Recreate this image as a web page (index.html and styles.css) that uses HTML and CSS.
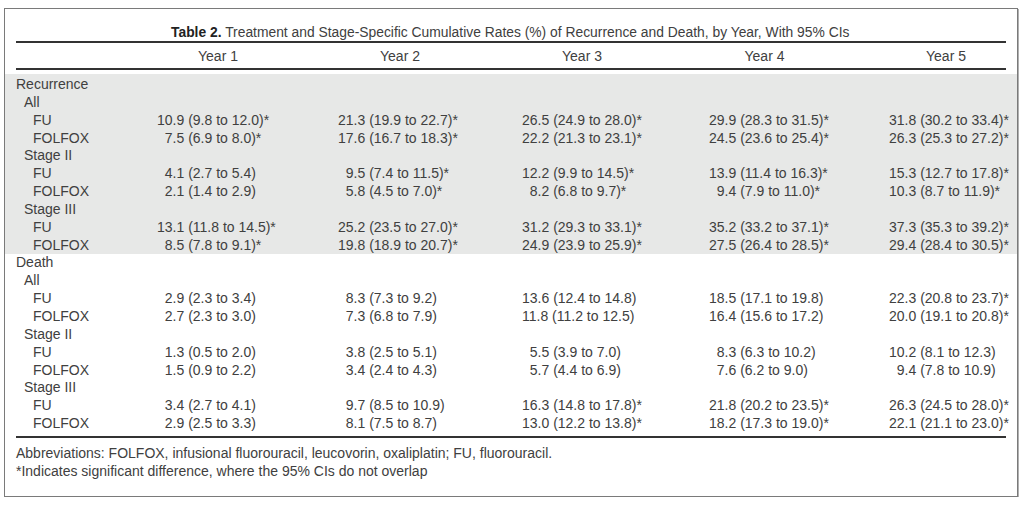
FILE: index.html
```html
<!DOCTYPE html>
<html>
<head>
<meta charset="utf-8">
<link rel="stylesheet" href="styles.css">
</head>
<body>
<div class="frame">
  <div class="caption"><b>Table 2.</b> Treatment and Stage-Specific Cumulative Rates (%) of Recurrence and Death, by Year, With 95% CIs</div>
  <div class="head">
    <span></span><span>Year 1</span><span>Year 2</span><span>Year 3</span><span>Year 4</span><span class="last">Year 5</span>
  </div>
  <div class="band shaded">
    <div class="row"><span class="l0">Recurrence</span></div>
    <div class="row"><span class="l1">All</span></div>
    <div class="row"><span class="l2">FU</span><span>10.9 (9.8 to 12.0)*</span><span>21.3 (19.9 to 22.7)*</span><span>26.5 (24.9 to 28.0)*</span><span>29.9 (28.3 to 31.5)*</span><span>31.8 (30.2 to 33.4)*</span></div>
    <div class="row"><span class="l2">FOLFOX</span><span class="d1">7.5 (6.9 to 8.0)*</span><span>17.6 (16.7 to 18.3)*</span><span>22.2 (21.3 to 23.1)*</span><span>24.5 (23.6 to 25.4)*</span><span>26.3 (25.3 to 27.2)*</span></div>
    <div class="row"><span class="l1">Stage II</span></div>
    <div class="row"><span class="l2">FU</span><span class="d1">4.1 (2.7 to 5.4)</span><span class="d1">9.5 (7.4 to 11.5)*</span><span>12.2 (9.9 to 14.5)*</span><span>13.9 (11.4 to 16.3)*</span><span>15.3 (12.7 to 17.8)*</span></div>
    <div class="row"><span class="l2">FOLFOX</span><span class="d1">2.1 (1.4 to 2.9)</span><span class="d1">5.8 (4.5 to 7.0)*</span><span class="d1">8.2 (6.8 to 9.7)*</span><span class="d1">9.4 (7.9 to 11.0)*</span><span>10.3 (8.7 to 11.9)*</span></div>
    <div class="row"><span class="l1">Stage III</span></div>
    <div class="row"><span class="l2">FU</span><span>13.1 (11.8 to 14.5)*</span><span>25.2 (23.5 to 27.0)*</span><span>31.2 (29.3 to 33.1)*</span><span>35.2 (33.2 to 37.1)*</span><span>37.3 (35.3 to 39.2)*</span></div>
    <div class="row"><span class="l2">FOLFOX</span><span class="d1">8.5 (7.8 to 9.1)*</span><span>19.8 (18.9 to 20.7)*</span><span>24.9 (23.9 to 25.9)*</span><span>27.5 (26.4 to 28.5)*</span><span>29.4 (28.4 to 30.5)*</span></div>
  </div>
  <div class="band">
    <div class="row"><span class="l0">Death</span></div>
    <div class="row"><span class="l1">All</span></div>
    <div class="row"><span class="l2">FU</span><span class="d1">2.9 (2.3 to 3.4)</span><span class="d1">8.3 (7.3 to 9.2)</span><span>13.6 (12.4 to 14.8)</span><span>18.5 (17.1 to 19.8)</span><span>22.3 (20.8 to 23.7)*</span></div>
    <div class="row"><span class="l2">FOLFOX</span><span class="d1">2.7 (2.3 to 3.0)</span><span class="d1">7.3 (6.8 to 7.9)</span><span>11.8 (11.2 to 12.5)</span><span>16.4 (15.6 to 17.2)</span><span>20.0 (19.1 to 20.8)*</span></div>
    <div class="row"><span class="l1">Stage II</span></div>
    <div class="row"><span class="l2">FU</span><span class="d1">1.3 (0.5 to 2.0)</span><span class="d1">3.8 (2.5 to 5.1)</span><span class="d1">5.5 (3.9 to 7.0)</span><span class="d1">8.3 (6.3 to 10.2)</span><span>10.2 (8.1 to 12.3)</span></div>
    <div class="row"><span class="l2">FOLFOX</span><span class="d1">1.5 (0.9 to 2.2)</span><span class="d1">3.4 (2.4 to 4.3)</span><span class="d1">5.7 (4.4 to 6.9)</span><span class="d1">7.6 (6.2 to 9.0)</span><span class="d1">9.4 (7.8 to 10.9)</span></div>
    <div class="row"><span class="l1">Stage III</span></div>
    <div class="row"><span class="l2">FU</span><span class="d1">3.4 (2.7 to 4.1)</span><span class="d1">9.7 (8.5 to 10.9)</span><span>16.3 (14.8 to 17.8)*</span><span>21.8 (20.2 to 23.5)*</span><span>26.3 (24.5 to 28.0)*</span></div>
    <div class="row"><span class="l2">FOLFOX</span><span class="d1">2.9 (2.5 to 3.3)</span><span class="d1">8.1 (7.5 to 8.7)</span><span>13.0 (12.2 to 13.8)*</span><span>18.2 (17.3 to 19.0)*</span><span>22.1 (21.1 to 23.0)*</span></div>
  </div>
  <div class="endrule"></div>
  <div class="notes">
    <p>Abbreviations: FOLFOX, infusional fluorouracil, leucovorin, oxaliplatin; FU, fluorouracil.</p>
    <p>*Indicates significant difference, where the 95% CIs do not overlap</p>
  </div>
</div>
</body>
</html>
```

FILE: styles.css
```css
html, body {
  margin: 0;
  padding: 0;
  background: #ffffff;
}
body {
  font-family: "Liberation Sans", Arial, sans-serif;
  font-size: 14px;
  color: #404040;
  padding: 8px 6px 0 4px;
}
.frame {
  box-sizing: border-box;
  width: 1014px;
  height: 489px;
  border: 1.5px solid #7a7a7a;
  box-shadow: 1px 1px 0 #b0b0b0;
}
.caption {
  margin: 14px 11px 0 11px;
  font-size: 13.85px;
  line-height: 18px;
  padding-left: 155px;
  border-bottom: 2px solid #333;
}
.caption b {
  font-weight: bold;
  color: #222;
}
.head {
  margin: 0 11px;
  display: grid;
  grid-template-columns: 111px 182px 182px 182px 183px 1fr;
  line-height: 18px;
  padding: 4px 0 3px;
  border-bottom: 2px solid #333;
  text-align: center;
}
.head .last {
  text-align: right;
  padding-right: 40px;
}
.band {
  padding: 0 11px;
}
.shaded {
  margin-top: 4px;
  padding-top: 2px;
  background: #e7e8e7;
}
.row {
  display: grid;
  grid-template-columns: 141px 181px 184px 187px 180px 1fr;
  height: 17.85px;
  line-height: 17.85px;
  white-space: nowrap;
}
.l0 { padding-left: 0; }
.l1 { padding-left: 8px; }
.l2 { padding-left: 17px; }
.d1 { padding-left: 1ch; }
.endrule {
  margin: 3px 11px 0;
  border-bottom: 2px solid #333;
}
.notes {
  padding: 6px 11px 0;
}
.notes p {
  margin: 0;
  line-height: 18px;
}
```
